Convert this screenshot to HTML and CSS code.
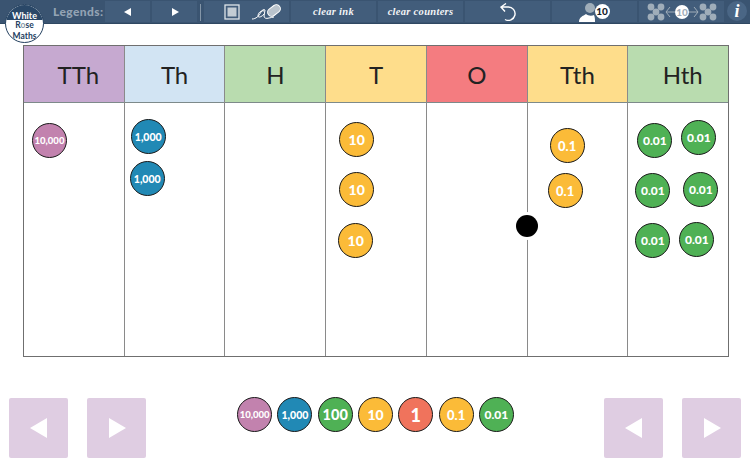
FILE: index.html
```html
<!DOCTYPE html>
<html lang="en">
<head>
  <meta charset="UTF-8" />
  <title>Place Value Counters</title>
  <link rel="stylesheet" href="styles.css">
</head>
<body>

<header class="toolbar">
  <div class="logo">
    <span class="logo-top">White</span>
    <span class="logo-bottom">R<span class="logo-o">o</span>se<br>Maths</span>
  </div>
  <span class="legends">Legends:</span>
  <button class="tool tool-arrow"><svg width="10" height="10" viewBox="0 0 10 10"><path d="M8 1v8L1 5z" fill="#fff"/></svg></button>
  <button class="tool tool-arrow"><svg width="10" height="10" viewBox="0 0 10 10"><path d="M2 1v8l7-4z" fill="#fff"/></svg></button>
  <span class="divider"></span>
  <button class="tool tool-ink">
    <svg width="16" height="16" viewBox="0 0 16 16"><rect x="1" y="1" width="14" height="14" fill="none" stroke="#dfe5ea" stroke-width="1.3"/><rect x="3.5" y="3.5" width="9" height="9" fill="#c3ccd4"/></svg>
    <svg width="31" height="18" viewBox="0 0 31 18">
      <path d="M1 16c4 0 7-3 9-7 1-2 3-3 4-2l-1 6c0 2 2 3 5 2 2 0 3-1 5-1M13 8c-3-1-6 2-6 5 0 2 4 1 6-2" fill="none" stroke="#fff" stroke-width="1"/>
      <rect x="16" y="3.5" width="14" height="8" rx="4" transform="rotate(-38 23 7.5)" fill="#b9c3cc" stroke="#fff" stroke-width="1"/>
    </svg>
  </button>
  <button class="tool tool-text">clear ink</button>
  <button class="tool tool-text">clear counters</button>
  <button class="tool tool-undo"><svg width="20" height="18" viewBox="0 0 20 18"><path d="M3 4h7a6.7 6.7 0 1 1-3 12.5M8 0.5L3 4l4 4.5" fill="none" stroke="#fff" stroke-width="1.4"/></svg></button>
  <button class="tool tool-person">
    <svg width="20" height="20" viewBox="0 0 20 20"><circle cx="12" cy="6" r="5" fill="#9fadb9"/><path d="M1 20c0-5 4-6 7-8 2 2 6 2 8 1 1 2 1 5 1 7z" fill="#fff"/></svg>
    <span class="ten-badge">10</span>
  </button>
  <button class="tool tool-swap">
    <svg width="70" height="20" viewBox="0 0 70 20">
      <g fill="#9fadb9">
        <circle cx="4" cy="5" r="3.4"/><circle cx="14" cy="5" r="3.4"/><circle cx="9" cy="10" r="3.4"/><circle cx="4" cy="15" r="3.4"/><circle cx="14" cy="15" r="3.4"/>
        <circle cx="56" cy="5" r="3.4"/><circle cx="66" cy="5" r="3.4"/><circle cx="61" cy="10" r="3.4"/><circle cx="56" cy="15" r="3.4"/><circle cx="66" cy="15" r="3.4"/>
      </g>
      <path d="M28 10H19l4-5M19 10l4 5M42 10h9l-4-5M51 10l-4 5" fill="none" stroke="#9fadb9"/>
      <circle cx="35" cy="10" r="7" fill="#fff"/>
      <text x="35" y="13.5" text-anchor="middle" class="swap-num">10</text>
    </svg>
  </button>
  <button class="tool tool-info">i</button>
</header>

<main class="board">
  <div class="col">
    <div class="col-head head-purple shift-right">TTh</div>
    <div class="col-body">
      <span class="counter pink small-text" style="left:8px;top:20px">10,000</span>
    </div>
  </div>
  <div class="col">
    <div class="col-head head-blue">Th</div>
    <div class="col-body">
      <span class="counter blue mid-text" style="left:6px;top:16px">1,000</span>
      <span class="counter blue mid-text" style="left:5px;top:58px">1,000</span>
    </div>
  </div>
  <div class="col">
    <div class="col-head head-green">H</div>
    <div class="col-body"></div>
  </div>
  <div class="col">
    <div class="col-head head-yellow">T</div>
    <div class="col-body">
      <span class="counter yellow" style="left:13px;top:19px">10</span>
      <span class="counter yellow" style="left:13px;top:69px">10</span>
      <span class="counter yellow" style="left:12px;top:120px">10</span>
    </div>
  </div>
  <div class="col">
    <div class="col-head head-red">O</div>
    <div class="col-body"></div>
  </div>
  <div class="col">
    <div class="col-head head-yellow">Tth</div>
    <div class="col-body">
      <span class="counter yellow tenth-text" style="left:22px;top:25px">0.1</span>
      <span class="counter yellow tenth-text" style="left:20px;top:70px">0.1</span>
    </div>
    <span class="decimal-dot"></span>
  </div>
  <div class="col">
    <div class="col-head head-green shift-right">Hth</div>
    <div class="col-body">
      <span class="counter green hundredth-text" style="left:9px;top:20px">0.01</span>
      <span class="counter green hundredth-text" style="left:53px;top:17px">0.01</span>
      <span class="counter green hundredth-text" style="left:7px;top:70px">0.01</span>
      <span class="counter green hundredth-text" style="left:55px;top:69px">0.01</span>
      <span class="counter green hundredth-text" style="left:7px;top:120px">0.01</span>
      <span class="counter green hundredth-text" style="left:51px;top:119px">0.01</span>
    </div>
  </div>
</main>

<footer class="bottom">
  <div class="nav-pair">
    <button class="nav-btn"><svg width="18" height="20" viewBox="0 0 18 20"><path d="M17 0v20L0 10z" fill="#fff"/></svg></button>
    <button class="nav-btn"><svg width="18" height="20" viewBox="0 0 18 20"><path d="M1 0v20l17-10z" fill="#fff"/></svg></button>
  </div>
  <div class="tray">
    <span class="counter pink small-text">10,000</span>
    <span class="counter blue mid-text">1,000</span>
    <span class="counter green big-text">100</span>
    <span class="counter yellow">10</span>
    <span class="counter red one-text">1</span>
    <span class="counter yellow tenth-text">0.1</span>
    <span class="counter green hundredth-text">0.01</span>
  </div>
  <div class="nav-pair">
    <button class="nav-btn"><svg width="18" height="20" viewBox="0 0 18 20"><path d="M17 0v20L0 10z" fill="#fff"/></svg></button>
    <button class="nav-btn"><svg width="18" height="20" viewBox="0 0 18 20"><path d="M1 0v20l17-10z" fill="#fff"/></svg></button>
  </div>
</footer>

</body>
</html>
```

FILE: styles.css
```css
body {
  font-family: 'Lato', 'Open Sans', sans-serif;
  margin: 0;
  background-color: #fff;
  color: #222;
  width: 750px;
  height: 468px;
  overflow: hidden;
}

button {
  border: none;
  padding: 0;
  font-family: inherit;
}

/* top bar */
.toolbar {
  height: 24px;
  box-sizing: border-box;
  background-color: #3a5471;
  border-bottom: 1px solid #2f4862;
  display: flex;
  align-items: stretch;
  gap: 2px;
  padding: 1px 0 1px 105px;
  position: relative;
}

.legends {
  position: absolute;
  left: 53px;
  top: 4px;
  color: #93a3b4;
  font-size: 12px;
  font-weight: 900;
  letter-spacing: 0.4px;
}

.tool {
  background-color: #425d7b;
  color: #fff;
  display: flex;
  align-items: center;
  justify-content: center;
}

.tool-arrow {
  width: 45px;
}

.divider {
  width: 1px;
  margin: 3px 1px 1px 1px;
  background-color: #8496a8;
}

.tool-ink {
  width: 85px;
  gap: 11px;
  padding-left: 13px;
  box-sizing: border-box;
}

.tool-text {
  width: 85px;
  font-family: 'Liberation Serif', serif;
  font-style: italic;
  font-weight: bold;
  font-size: 10.5px;
  letter-spacing: 0.3px;
  color: #f2f4f6;
}

.tool-undo {
  width: 85px;
}

.tool-person {
  width: 85px;
  gap: 0;
  padding-right: 2px;
  box-sizing: border-box;
}

.ten-badge {
  width: 15px;
  height: 15px;
  border-radius: 50%;
  background-color: #fff;
  color: #14202c;
  font-size: 10px;
  font-weight: 900;
  line-height: 15px;
  text-align: center;
  margin-left: -3px;
  margin-top: -1px;
}

.tool-swap {
  width: 85px;
}

.swap-num {
  font-family: 'Lato', sans-serif;
  font-size: 10px;
  font-weight: 900;
  fill: #9fadb9;
}

.tool-info {
  width: 20px;
  height: 20px;
  margin-left: 1px;
  border-radius: 50%;
  background-color: #4a6685;
  font-family: 'Liberation Serif', serif;
  font-weight: bold;
  font-style: italic;
  font-size: 18px;
}

.logo {
  position: absolute;
  left: 5px;
  top: 4px;
  width: 37px;
  height: 37px;
  border: 1px solid #23405f;
  border-radius: 50%;
  background-color: #fff;
  overflow: hidden;
  text-align: center;
  font-size: 9px;
  font-weight: 700;
  color: #23405f;
  z-index: 2;
}

.logo-top {
  display: block;
  background-color: #2a4868;
  color: #fff;
  height: 15px;
  line-height: 11px;
  padding-top: 5px;
  box-sizing: border-box;
}

.logo-bottom {
  display: block;
  font-size: 8.5px;
  line-height: 10.5px;
}

.logo-o {
  color: #8a9bac;
}

/* place value table */
.board {
  display: flex;
  margin: 21px 0 0 23px;
  width: 706px;
  height: 312px;
  border: 1px solid #6f6f6f;
  box-sizing: border-box;
}

.col {
  flex: 1;
  box-sizing: border-box;
  display: flex;
  flex-direction: column;
  position: relative;
  border-left: 1px solid #8a8a8a;
}

.col:first-child {
  border-left: none;
}

.col-head {
  height: 56px;
  border-bottom: 1px solid #7d8a8a;
  display: flex;
  align-items: center;
  justify-content: center;
  font-size: 24px;
  color: #222;
}

.shift-right {
  padding-left: 9px;
}

.col-body {
  flex: 1;
  position: relative;
}

.head-purple { background-color: #c6a9d0; }
.head-blue { background-color: #d2e4f3; }
.head-green { background-color: #b9dcaf; }
.head-yellow { background-color: #fedd8b; }
.head-red { background-color: #f47c80; }

.decimal-dot {
  position: absolute;
  left: -12px;
  top: 169px;
  width: 22px;
  height: 22px;
  border-radius: 50%;
  background-color: #000;
  box-shadow: 0 0 0 3px #fff;
}

/* counters */
.counter {
  width: 35px;
  height: 35px;
  box-sizing: border-box;
  border: 1px solid #1a1a1a;
  border-radius: 50%;
  display: flex;
  align-items: center;
  justify-content: center;
  color: #fff;
  font-weight: 900;
  font-size: 14px;
  flex-shrink: 0;
}

.col-body .counter {
  position: absolute;
}

.small-text { font-size: 9.5px; }
.mid-text { font-size: 10.5px; }
.tenth-text { font-size: 13px; }
.hundredth-text { font-size: 12px; }
.big-text { font-size: 14.5px; }
.one-text { font-size: 18px; }

.pink { background-color: #c282ae; }
.blue { background-color: #2189b5; }
.green { background-color: #4fb155; }
.yellow { background-color: #fbbb38; }
.red { background-color: #f0735c; }

/* bottom row */
.bottom {
  display: flex;
  justify-content: space-between;
  padding: 0 9px;
  margin-top: 41px;
  position: relative;
}

.nav-pair {
  display: flex;
  gap: 19px;
}

.nav-btn {
  width: 59px;
  height: 60px;
  border-radius: 2px;
  background-color: #dfcde2;
  display: flex;
  align-items: center;
  justify-content: center;
}

.tray {
  display: flex;
  gap: 5.3px;
  margin: -1px 0 0 1px;
  align-self: flex-start;
}
```
